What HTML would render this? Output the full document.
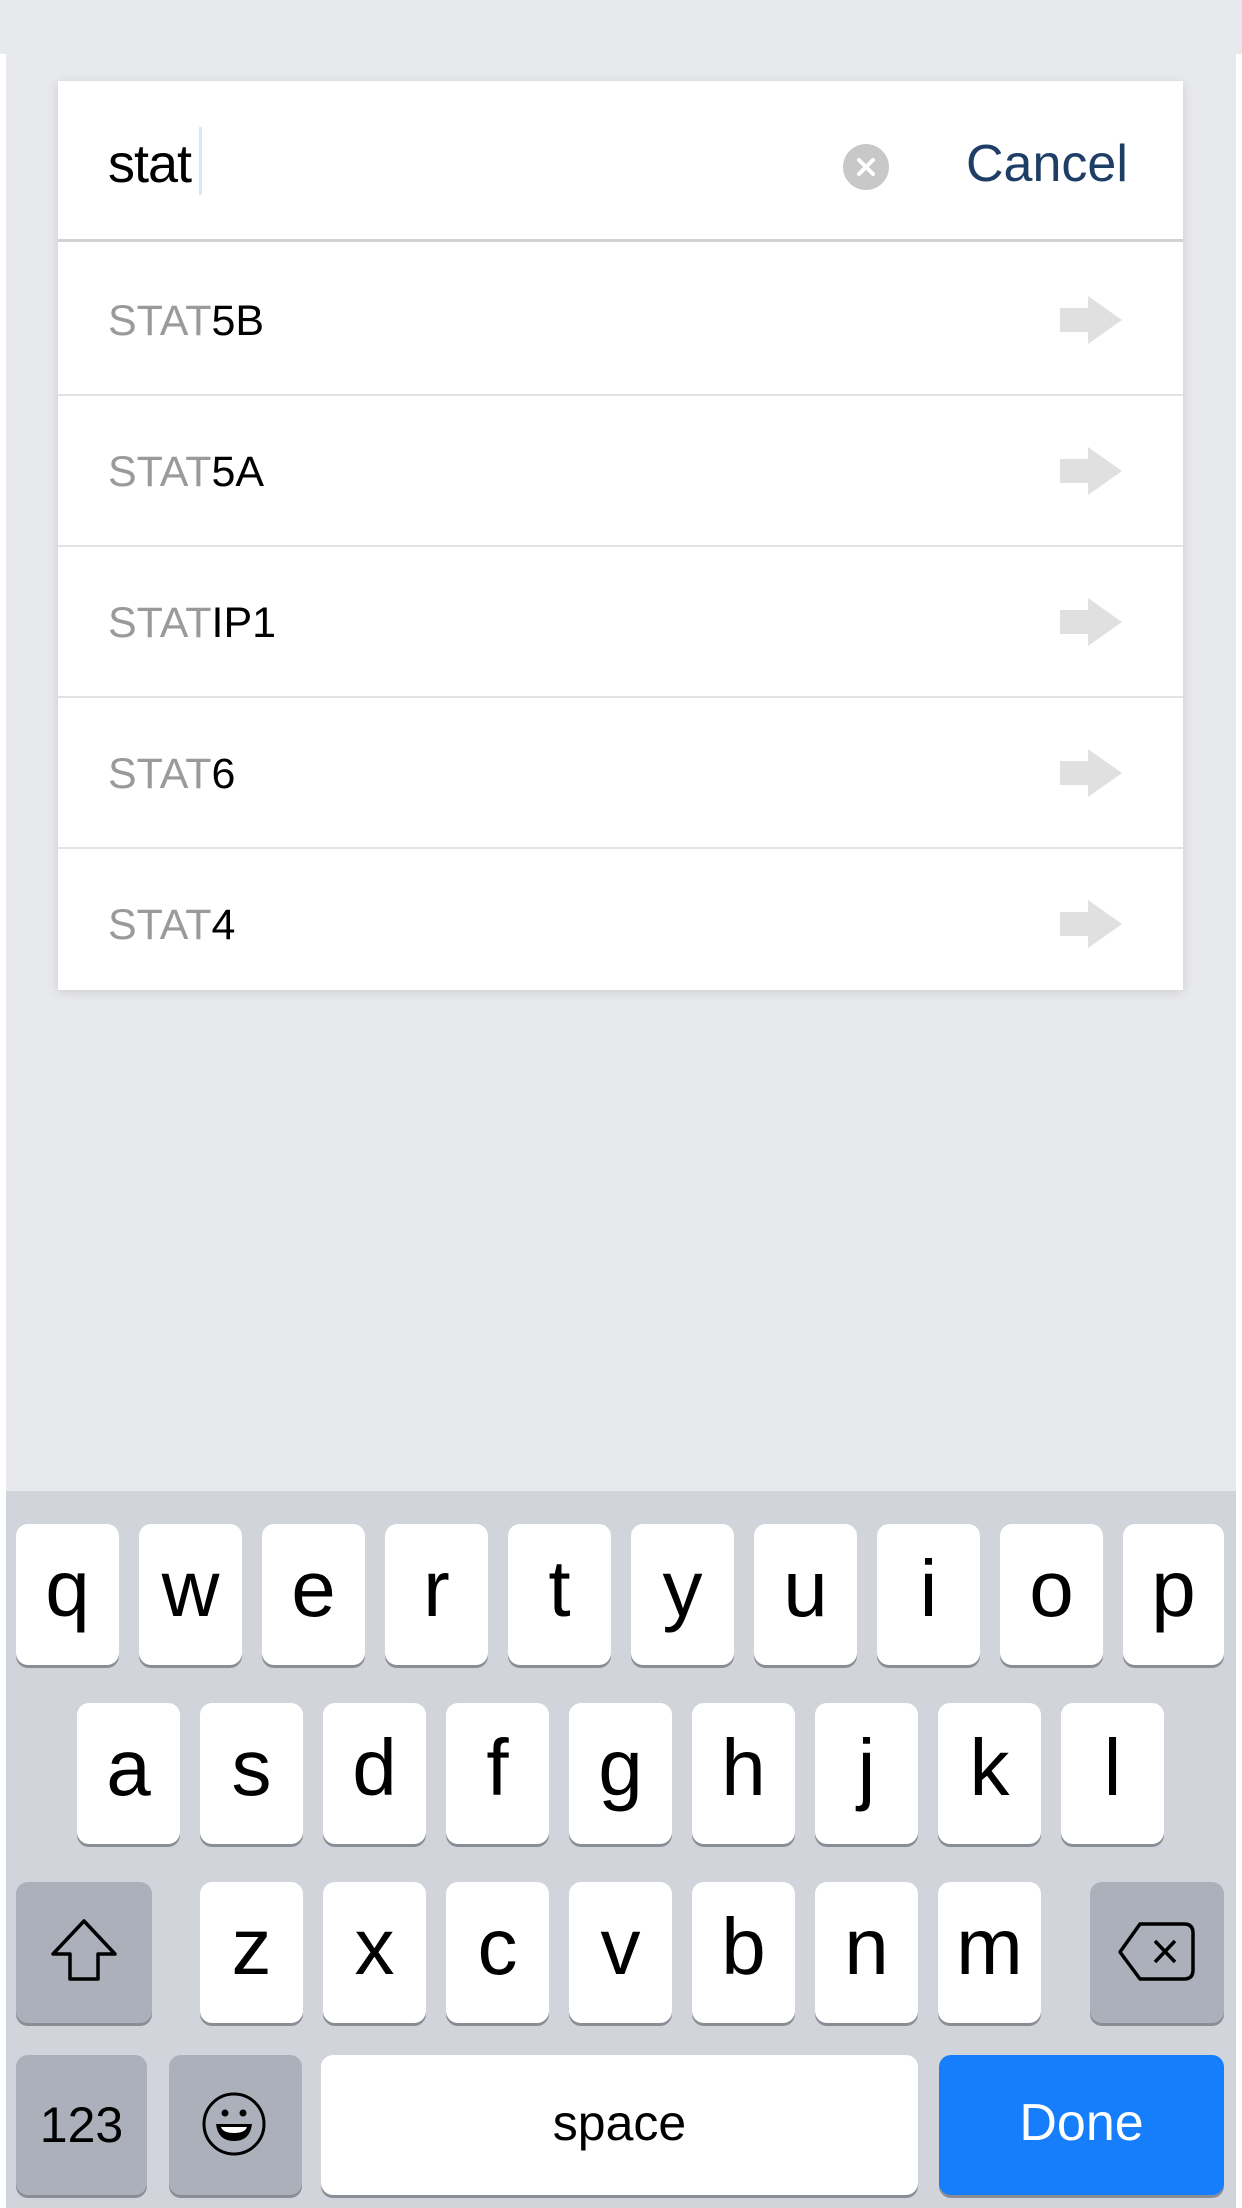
<!DOCTYPE html>
<html><head><meta charset="utf-8"><style>
*{margin:0;padding:0;box-sizing:border-box}
body{width:1242px;height:2208px;background:#fff;position:relative;overflow:hidden;font-family:"Liberation Sans",sans-serif}
.bg{position:absolute;left:6px;top:0;width:1230px;height:2208px;background:#e8e9ed}
.top{position:absolute;left:0;top:0;width:1242px;height:54px;background:#e8e9ed}
.card{position:absolute;left:58px;top:81px;width:1125px;height:909px;background:#fff;box-shadow:0 2px 10px rgba(0,0,0,0.12)}
.search{position:absolute;left:0;top:0;width:1125px;height:161px;border-bottom:3px solid #d2d3d6}
.stat{position:absolute;left:50px;top:52px;font-size:54px;color:#000;letter-spacing:-1px}
.cursor{position:absolute;left:141px;top:46px;width:3px;height:68px;background:#dbe6fb}
.clr{position:absolute;left:785px;top:63px;width:46px;height:46px;border-radius:50%;background:#c8c8c8}
.cancel{position:absolute;left:908px;top:53px;font-size:52px;color:#1e3e66}
.row{position:absolute;left:0;width:1125px;height:151px;border-bottom:2px solid #e3e3e3}
.row span.t{position:absolute;left:50px;top:52px;font-size:43px;color:#000}
.row span.t b{font-weight:normal;color:#9a9a9a}
.row svg{position:absolute;left:1002px;top:51px}
.kb{position:absolute;left:6px;top:1491px;width:1230px;height:717px;background:#d1d4da}
.k{position:absolute;width:103px;height:141px;background:#fff;border-radius:12px;box-shadow:0 3px 0 #8a8d93;text-align:center;font-size:80px;line-height:130px;color:#000}
.m{background:#abb0ba}
</style></head><body>
<div class="bg"></div><div class="top"></div>
<div class="card">
 <div class="search"><div class="stat">stat</div><div class="cursor"></div>
  <div class="clr"><svg width="46" height="46"><path d="M16 16L30 30M30 16L16 30" stroke="#fff" stroke-width="4" stroke-linecap="round"/></svg></div>
  <div class="cancel">Cancel</div></div>
 <div class="row" style="top:164px"><span class="t"><b>STAT</b>5B</span><svg width="64" height="48"><path d="M0 12H28V0L62 24L28 48V36H0Z" fill="#e0e0e0"/></svg></div>
 <div class="row" style="top:315px"><span class="t"><b>STAT</b>5A</span><svg width="64" height="48"><path d="M0 12H28V0L62 24L28 48V36H0Z" fill="#e0e0e0"/></svg></div>
 <div class="row" style="top:466px"><span class="t"><b>STAT</b>IP1</span><svg width="64" height="48"><path d="M0 12H28V0L62 24L28 48V36H0Z" fill="#e0e0e0"/></svg></div>
 <div class="row" style="top:617px"><span class="t"><b>STAT</b>6</span><svg width="64" height="48"><path d="M0 12H28V0L62 24L28 48V36H0Z" fill="#e0e0e0"/></svg></div>
 <div class="row" style="top:768px;border:none"><span class="t"><b>STAT</b>4</span><svg width="64" height="48"><path d="M0 12H28V0L62 24L28 48V36H0Z" fill="#e0e0e0"/></svg></div>
</div>
<div class="kb"></div>
<div class="k" style="left:16px;top:1524px">q</div>
<div class="k" style="left:139px;top:1524px">w</div>
<div class="k" style="left:262px;top:1524px">e</div>
<div class="k" style="left:385px;top:1524px">r</div>
<div class="k" style="left:508px;top:1524px">t</div>
<div class="k" style="left:631px;top:1524px">y</div>
<div class="k" style="left:754px;top:1524px">u</div>
<div class="k" style="left:877px;top:1524px">i</div>
<div class="k" style="left:1000px;top:1524px">o</div>
<div class="k" style="left:1123px;top:1524px;width:101px">p</div>
<div class="k" style="left:77px;top:1703px">a</div>
<div class="k" style="left:200px;top:1703px">s</div>
<div class="k" style="left:323px;top:1703px">d</div>
<div class="k" style="left:446px;top:1703px">f</div>
<div class="k" style="left:569px;top:1703px">g</div>
<div class="k" style="left:692px;top:1703px">h</div>
<div class="k" style="left:815px;top:1703px">j</div>
<div class="k" style="left:938px;top:1703px">k</div>
<div class="k" style="left:1061px;top:1703px">l</div>
<div class="k m" style="left:16px;top:1882px;width:136px"><svg width="136" height="141" style="position:absolute;left:0;top:0"><path d="M68 39L37 72H54V97H82V72H99Z" fill="none" stroke="#000" stroke-width="3.5" stroke-linejoin="round"/></svg></div>
<div class="k" style="left:200px;top:1882px">z</div>
<div class="k" style="left:323px;top:1882px">x</div>
<div class="k" style="left:446px;top:1882px">c</div>
<div class="k" style="left:569px;top:1882px">v</div>
<div class="k" style="left:692px;top:1882px">b</div>
<div class="k" style="left:815px;top:1882px">n</div>
<div class="k" style="left:938px;top:1882px">m</div>
<div class="k m" style="left:1090px;top:1882px;width:134px"><svg width="134" height="141" style="position:absolute;left:0;top:0"><path d="M50 42H94Q103 42 103 51V88Q103 97 94 97H50L30 70Z" fill="none" stroke="#000" stroke-width="3.5" stroke-linejoin="round"/><path d="M65 59L85 80M85 59L65 80" stroke="#000" stroke-width="3.5"/></svg></div>
<div class="k m" style="left:16px;top:2055px;width:131px;height:140px;font-size:50px;line-height:140px">123</div>
<div class="k m" style="left:169px;top:2055px;width:133px;height:140px"><svg width="133" height="140" style="position:absolute;left:0;top:0"><circle cx="65" cy="69" r="30" fill="none" stroke="#000" stroke-width="3"/><circle cx="56" cy="58" r="3.5"/><circle cx="74" cy="58" r="3.5"/><path d="M47 69H83Q81 86 65 86Q49 86 47 69Z"/><path d="M52 72H78Q76 78 65 78Q54 78 52 72Z" fill="#fff"/></svg></div>
<div class="k" style="left:321px;top:2055px;width:597px;height:140px;font-size:50px;line-height:136px">space</div>
<div class="k" style="left:939px;top:2055px;width:285px;height:140px;background:#167efa;color:#fff;font-size:52px;line-height:136px">Done</div>
</body></html>
